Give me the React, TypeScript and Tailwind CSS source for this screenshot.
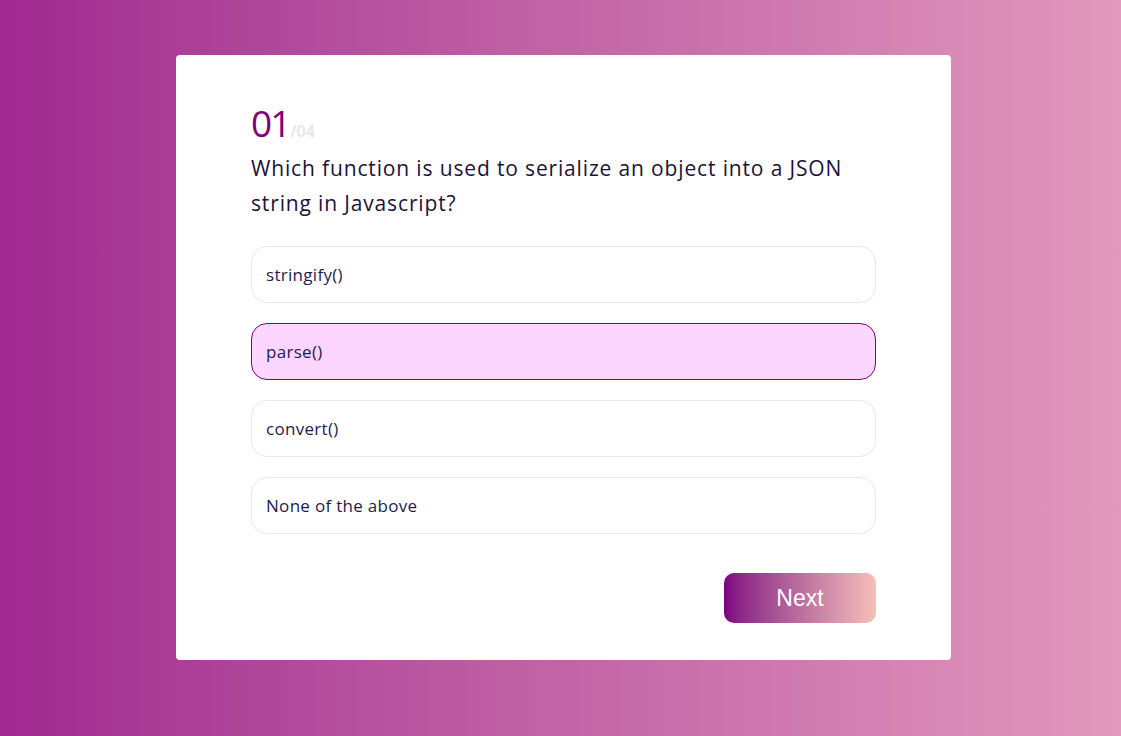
import { useState } from "react";

const options = ["stringify()", "parse()", "convert()", "None of the above"];

export default function App() {
  const [selected, setSelected] = useState(1);

  return (
    <div className="min-h-screen w-full bg-gradient-to-r from-[#a0288f] to-[#e298bc] pt-[55px] [font-family:'Open_Sans','Noto_Sans',sans-serif]">
      <div className="ml-[176px] w-[775px] h-[605px] rounded-[4px] bg-white px-[75px] pt-[44px]">
        <div className="flex items-baseline">
          <span className="text-[37px] leading-[48px] tracking-[-2px] text-[#800080]">01</span>
          <span className="ml-[1px] text-[16px] font-semibold text-[#e5e5e8]">/04</span>
        </div>
        <h2 className="mt-[4px] text-[21px] leading-[35px] tracking-[0.85px] text-[#1c1338]">
          Which function is used to serialize an object into a JSON string in Javascript?
        </h2>
        <div className="mt-[25px] flex flex-col gap-[20px]">
          {options.map((opt, i) => (
            <button
              key={opt}
              onClick={() => setSelected(i)}
              className={
                i === selected
                  ? "h-[57px] w-full rounded-[16px] border border-[#800080] bg-[#fcd6ff] px-[14px] text-left text-[17px] tracking-[0.3px] text-[#1f1b4d]"
                  : "h-[57px] w-full rounded-[16px] border border-[#e8e8e8] bg-white px-[14px] text-left text-[17px] tracking-[0.3px] text-[#1f1b4d]"
              }
            >
              {opt}
            </button>
          ))}
        </div>
        <div className="mt-[39px] flex justify-end">
          <button className="h-[50px] w-[152px] rounded-[10px] bg-gradient-to-r from-[#800080] to-[#f6c0b7] text-[23px] text-white [font-family:'Liberation_Sans',Arial,sans-serif]">
            Next
          </button>
        </div>
      </div>
    </div>
  );
}
